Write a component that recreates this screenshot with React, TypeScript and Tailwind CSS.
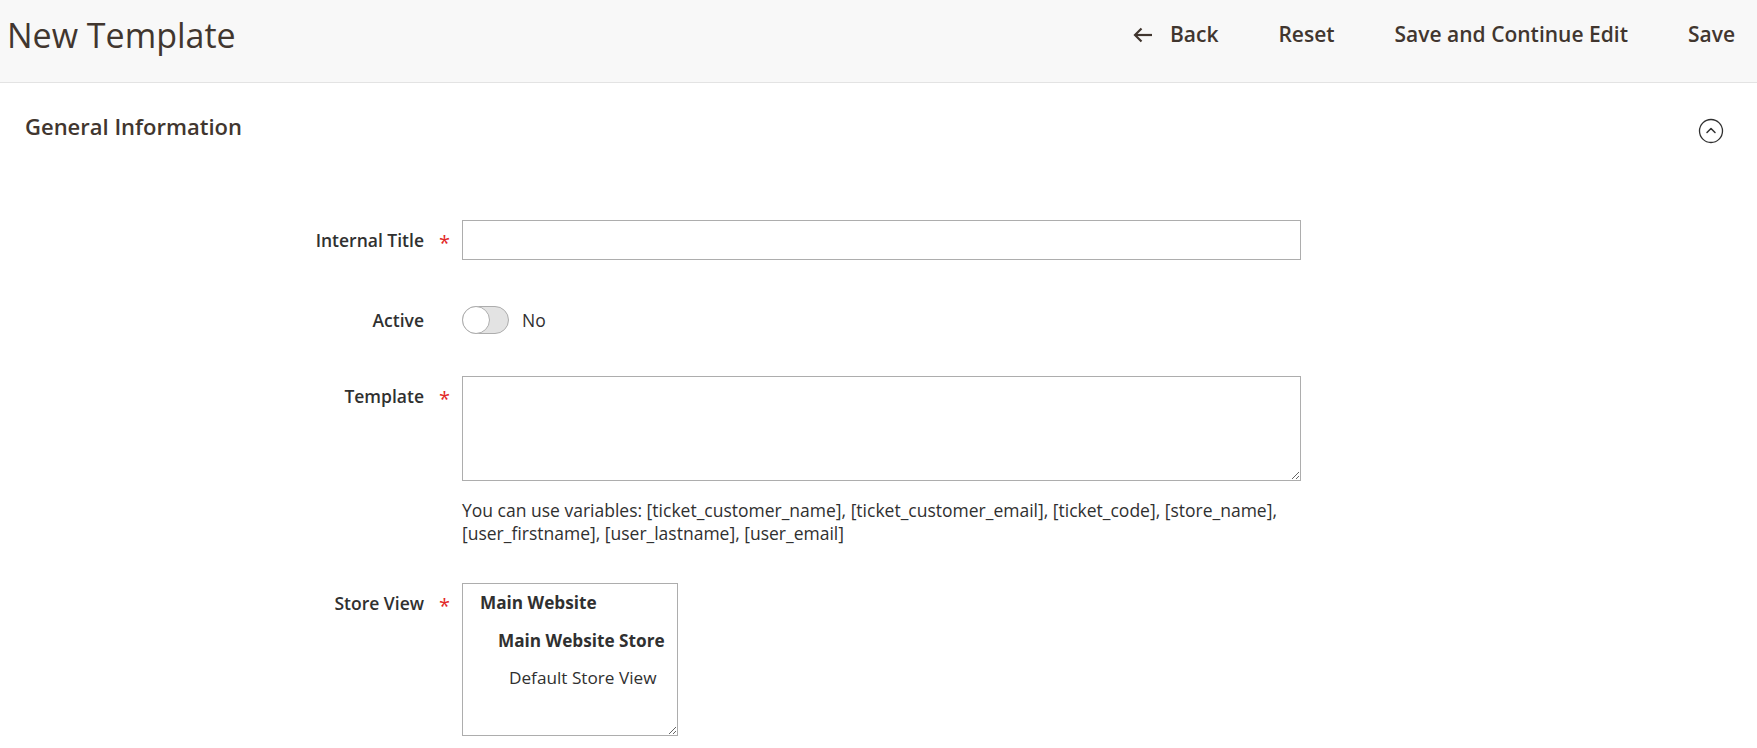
const font = { fontFamily: '"Open Sans", "Liberation Sans", sans-serif' };

const Required = () => (
  <span className="h-[40px] w-[38px] shrink-0 pl-[15px] pt-[3px] text-[20px] leading-[40px] text-[#e22626]">*</span>
);

const Label = ({ text, required }: { text: string; required?: boolean }) => (
  <div className="flex h-[40px] shrink-0">
    <label className="w-[424px] text-right text-[17.5px] font-semibold leading-[40px] text-[#303030]">
      {text}
    </label>
    {required ? <Required /> : <span className="w-[38px] shrink-0" />}
  </div>
);

const CollapseIcon = () => (
  <svg width="26" height="26" viewBox="0 0 26 26" fill="none" stroke="#303030">
    <circle cx="13" cy="13" r="11.5" strokeWidth="1.3" />
    <path d="M9 14.5 L13 10.5 L17 14.5" strokeWidth="1.5" strokeLinecap="round" strokeLinejoin="round" />
  </svg>
);

const BackArrow = () => (
  <svg width="20" height="16" viewBox="0 0 20 16" fill="none" stroke="#41362f" strokeWidth="2.2">
    <path d="M19 8 H2.5" />
    <path d="M8.5 1.5 L2 8 L8.5 14.5" />
  </svg>
);

export default function App() {
  return (
    <div className="min-h-[748px] bg-white" style={font}>
      <header className="flex h-[83px] items-start justify-between border-b border-[#e3e3e3] bg-[#f8f8f8] pl-[7px] pr-[22px]">
        <h1 className="pt-[18px] text-[34px] font-normal leading-none text-[#41362f]">New Template</h1>
        <div className="flex items-center gap-[60px] pt-[24px] text-[21px] font-semibold leading-none text-[#41362f]">
          <button type="button" className="flex items-center gap-[17px]">
            <BackArrow />
            <span>Back</span>
          </button>
          <button type="button">Reset</button>
          <button type="button">Save and Continue Edit</button>
          <button type="button">Save</button>
        </div>
      </header>

      <section className="pt-[29px]">
        <div className="flex items-start justify-between pl-[25px] pr-[33px]">
          <h2 className="text-[22px] font-semibold leading-[28px] text-[#41362f]">General Information</h2>
          <div className="mt-[6px]">
            <CollapseIcon />
          </div>
        </div>

        <div className="mt-[76px] flex flex-col">
          <div className="flex">
            <Label text="Internal Title" required />
            <input type="text" className="h-[40px] w-[839px] border border-[#adadad] bg-white px-3 outline-none" />
          </div>

          <div className="mt-[40px] flex items-center">
            <Label text="Active" />
            <div className="flex items-center gap-[13px]">
              <span className="relative block h-[28px] w-[47px] rounded-full border border-[#adadad] bg-[#e3e3e3]">
                <span className="absolute -left-px -top-px h-[28px] w-[28px] rounded-full border border-[#adadad] bg-white" />
              </span>
              <span className="text-[17.5px] text-[#303030]">No</span>
            </div>
          </div>

          <div className="mt-[36px] flex">
            <Label text="Template" required />
            <div className="flex w-[839px] flex-col">
              <textarea className="h-[105px] w-full resize-y border border-[#adadad] bg-white outline-none" />
              <p className="mt-[18px] text-[17.5px] leading-[23px] text-[#303030]">
                You can use variables: [ticket_customer_name], [ticket_customer_email], [ticket_code], [store_name], [user_firstname], [user_lastname], [user_email]
              </p>
            </div>
          </div>

          <div className="mt-[38px] flex">
            <Label text="Store View" required />
            <div className="h-[153px] w-[216px] resize overflow-hidden whitespace-nowrap border border-[#adadad] bg-white pl-[17px] text-[17.2px] leading-[37.5px] text-[#303030]">
              <div className="font-bold">Main Website</div>
              <div className="pl-[18px] font-bold">Main Website Store</div>
              <div className="pl-[29px]">Default Store View</div>
            </div>
          </div>
        </div>
      </section>
    </div>
  );
}
